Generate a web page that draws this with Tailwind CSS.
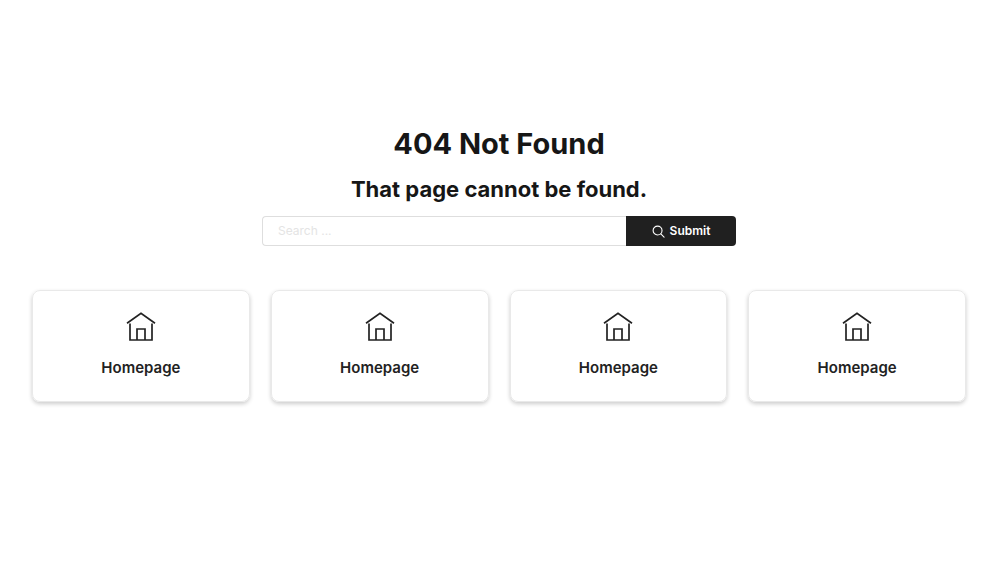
<!DOCTYPE html>
<html lang="en">
<head>
    <meta charset="UTF-8">
    <meta name="viewport" content="width=device-width, initial-scale=1.0">
    <title>404 Not Found</title>
    <script src="https://cdn.jsdelivr.net/npm/@tailwindcss/browser@4"></script>
</head>
<body class="min-h-screen bg-white font-['Inter',sans-serif] text-[#161616]">
    <main class="pt-[124px] pb-16 pl-8 pr-[34px]">
        <!-- Heading -->
        <div class="text-center">
            <h1 class="text-[29px] leading-10 font-bold">404 Not Found</h1>
            <h2 class="mt-[11px] text-[22px] leading-7 font-bold">That page cannot be found.</h2>
        </div>

        <!-- Search -->
        <form class="mx-auto mt-[13px] flex h-[30px] w-full max-w-[474px]" onsubmit="return false">
            <input id="search" type="search" aria-label="Search" placeholder="Search ..." class="min-w-0 flex-1 rounded-l border border-r-0 border-[#dedede] px-[15px] text-xs outline-none placeholder:text-[#e4e4e4]">
            <button type="submit" class="flex w-[110px] items-center justify-center gap-[5px] rounded-r bg-[#202020] text-xs font-semibold text-white">
                <svg class="h-[13px] w-[13px]" viewBox="0 0 14 14" fill="none" stroke="currentColor" stroke-width="1.2" stroke-linecap="round">
                    <circle cx="6" cy="6" r="4.8"/>
                    <path d="M9.5 9.5 13 13"/>
                </svg>
                Submit
            </button>
        </form>

        <!-- Quick links -->
        <nav class="mt-11 grid grid-cols-4 gap-[21px] text-[#222]">
            <a href="#" class="flex h-28 flex-col items-center rounded-lg border border-[#e9e9e9] pt-[21px] shadow-[0_2px_4px_rgba(0,0,0,0.2)]">
                <svg class="h-[29px] w-[30px]" viewBox="0 0 30 29" fill="none" stroke="currentColor" stroke-width="1.7">
                    <path d="M1 11.2 15 1.2l14 10M4 11.5V28h22V11.5M11 28V17h8v11"/>
                </svg>
                <span class="mt-[15px] text-[15px] leading-6 font-semibold">Homepage</span>
            </a>
            <a href="#" class="flex h-28 flex-col items-center rounded-lg border border-[#e9e9e9] pt-[21px] shadow-[0_2px_4px_rgba(0,0,0,0.2)]">
                <svg class="h-[29px] w-[30px]" viewBox="0 0 30 29" fill="none" stroke="currentColor" stroke-width="1.7">
                    <path d="M1 11.2 15 1.2l14 10M4 11.5V28h22V11.5M11 28V17h8v11"/>
                </svg>
                <span class="mt-[15px] text-[15px] leading-6 font-semibold">Homepage</span>
            </a>
            <a href="#" class="flex h-28 flex-col items-center rounded-lg border border-[#e9e9e9] pt-[21px] shadow-[0_2px_4px_rgba(0,0,0,0.2)]">
                <svg class="h-[29px] w-[30px]" viewBox="0 0 30 29" fill="none" stroke="currentColor" stroke-width="1.7">
                    <path d="M1 11.2 15 1.2l14 10M4 11.5V28h22V11.5M11 28V17h8v11"/>
                </svg>
                <span class="mt-[15px] text-[15px] leading-6 font-semibold">Homepage</span>
            </a>
            <a href="#" class="flex h-28 flex-col items-center rounded-lg border border-[#e9e9e9] pt-[21px] shadow-[0_2px_4px_rgba(0,0,0,0.2)]">
                <svg class="h-[29px] w-[30px]" viewBox="0 0 30 29" fill="none" stroke="currentColor" stroke-width="1.7">
                    <path d="M1 11.2 15 1.2l14 10M4 11.5V28h22V11.5M11 28V17h8v11"/>
                </svg>
                <span class="mt-[15px] text-[15px] leading-6 font-semibold">Homepage</span>
            </a>
        </nav>
    </main>
</body>
</html>
